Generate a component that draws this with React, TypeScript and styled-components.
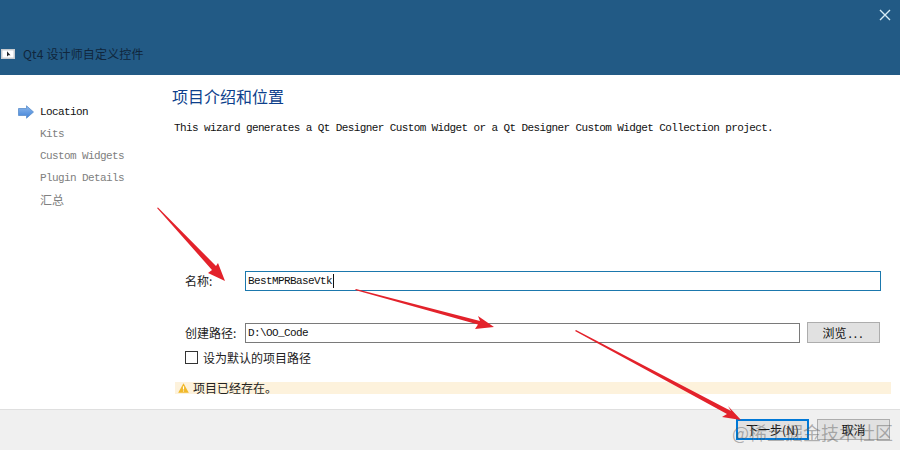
import React from "react";
import styled, { createGlobalStyle } from "styled-components";

const cjk = `"Noto Sans CJK SC", "Liberation Sans", sans-serif`;
const mono = `"Liberation Mono", "Noto Sans CJK SC", monospace`;

const Global = createGlobalStyle`
  html, body { margin: 0; padding: 0; background: #fff; }
`;

const Page = styled.div`
  position: relative;
  width: 900px;
  height: 450px;
  overflow: hidden;
  display: flex;
  flex-direction: column;
  background: #fff;
  font-family: ${cjk};
`;

const TitleBar = styled.header`
  height: 75px;
  flex: none;
  box-sizing: border-box;
  background: #225a85;
  display: flex;
  flex-direction: column;
  padding: 9px 9px 0 1px;
`;

const CloseRow = styled.div`
  display: flex;
  justify-content: flex-end;
  height: 12px;
`;

const TitleRow = styled.div`
  display: flex;
  align-items: center;
  gap: 8px;
  margin-top: 24px;
  height: 18px;
`;

const TitleText = styled.span`
  font-size: 12px;
  line-height: 18px;
  letter-spacing: 0.15px;
  color: #10263c;
`;

const Body = styled.div`
  flex: 1;
  min-height: 0;
  display: flex;
`;

const Sidebar = styled.nav`
  width: 173px;
  flex: none;
  box-sizing: border-box;
  padding: 26px 0 0 18px;
  display: flex;
  flex-direction: column;
`;

const NavItem = styled.div<{ $active?: boolean }>`
  height: 22px;
  display: flex;
  align-items: center;
  gap: 6px;
  padding-left: ${(p) => (p.$active ? 0 : 22)}px;
  font-family: ${mono};
  font-size: 11px;
  letter-spacing: -0.6px;
  color: ${(p) => (p.$active ? "#111" : "#808080")};
`;

const NavCjk = styled.span`
  font-family: ${cjk};
  font-size: 12px;
  line-height: 20px;
  letter-spacing: 0;
`;

const Main = styled.main`
  flex: 1;
  min-width: 0;
  box-sizing: border-box;
  padding: 9px 9px 15px 0;
  display: flex;
  flex-direction: column;
`;

const Heading = styled.h1`
  margin: 0 0 0 -1px;
  font-size: 16px;
  line-height: 24px;
  font-weight: 400;
  color: #0d3f8c;
`;

const Description = styled.p`
  margin: 12px 0 0 1px;
  font-family: ${mono};
  font-size: 11px;
  line-height: 16px;
  letter-spacing: -0.61px;
  color: #111;
`;

const Form = styled.div`
  margin-top: auto;
  display: flex;
  flex-direction: column;
`;

const FieldRow = styled.div<{ $top?: number }>`
  display: flex;
  align-items: center;
  gap: 7px;
  padding: 0 10px 0 12px;
  margin-top: ${(p) => p.$top ?? 0}px;
`;

const FieldLabel = styled.label`
  width: 60px;
  margin-right: -7px;
  flex: none;
  font-size: 12px;
  line-height: 20px;
  color: #222;
`;

const Field = styled.div<{ $focus?: boolean }>`
  flex: 1;
  min-width: 0;
  height: 20px;
  box-sizing: border-box;
  border: 1px solid ${(p) => (p.$focus ? "#1b78ad" : "#7a7a7a")};
  background: #fff;
  padding-left: 2px;
  display: flex;
  align-items: center;
  font-family: ${mono};
  font-size: 11px;
  letter-spacing: -0.6px;
  color: #111;
`;

const Caret = styled.span`
  width: 1px;
  height: 14px;
  background: #111;
  margin-left: 1px;
`;

const Button = styled.button<{ $primary?: boolean; $inset?: boolean }>`
  width: 73px;
  height: 21px;
  box-sizing: border-box;
  padding: 0;
  flex: none;
  margin-right: ${(p) => (p.$inset ? 1 : 0)}px;
  background: #e1e1e1;
  border: ${(p) => (p.$primary ? "2px solid #0078d7" : "1px solid #adadad")};
  font-family: ${cjk};
  font-size: 12px;
  line-height: 1;
  color: #111;
`;

const Dots = styled.span`
  letter-spacing: 2px;
  margin-left: 2px;
`;

const CheckRow = styled.div`
  display: flex;
  align-items: center;
  gap: 5px;
  margin: 8px 0 0 12px;
  height: 13px;
  font-size: 12px;
  color: #222;
`;

const CheckBox = styled.span`
  width: 13px;
  height: 13px;
  box-sizing: border-box;
  border: 1px solid #333;
  background: #fff;
`;

const Warning = styled.div`
  margin: 18px 0 0 2px;
  height: 12px;
  background: #fdf2dc;
  display: flex;
  align-items: center;
  gap: 4px;
  padding-left: 3px;
  font-size: 12px;
  line-height: 10px;
  color: #222;
`;

const Footer = styled.footer`
  height: 41px;
  flex: none;
  box-sizing: border-box;
  background: #f0f0f0;
  border-top: 1px solid #dfdfdf;
  padding: 9px 10px 0 0;
  display: flex;
  justify-content: flex-end;
  gap: 8px;
`;

const ArrowLayer = styled.svg`
  position: absolute;
  inset: 0;
  pointer-events: none;
`;

const Watermark = styled.div`
  position: absolute;
  right: 7px;
  bottom: 6px;
  font-size: 18px;
  line-height: 24px;
  color: rgba(90, 90, 90, 0.45);
  white-space: nowrap;
`;

const App: React.FC = () => (
  <Page>
    <Global />
    <TitleBar>
      <CloseRow>
        <svg width="12" height="12" viewBox="0 0 12 12">
          <path d="M1 1L11 11M11 1L1 11" stroke="#d6ecf7" strokeWidth="1.4" fill="none" />
        </svg>
      </CloseRow>
      <TitleRow>
        <svg width="14" height="10" viewBox="0 0 14 10">
          <rect x="0" y="0" width="14" height="10" fill="#c9ccd0" />
          <rect x="1.5" y="1.5" width="11" height="7" fill="#fff" />
          <path d="M6 2.2L6 7.5L7.4 6.3L9.5 6.3Z" fill="#20242a" />
        </svg>
        <TitleText>Qt4 设计师自定义控件</TitleText>
      </TitleRow>
    </TitleBar>
    <Body>
      <Sidebar>
        <NavItem $active>
          <svg width="16" height="14" viewBox="0 0 16 14">
            <defs>
              <linearGradient id="navArrow" x1="0" y1="0" x2="0" y2="1">
                <stop offset="0" stopColor="#8db8ec" />
                <stop offset="1" stopColor="#3f82d8" />
              </linearGradient>
            </defs>
            <path d="M0.5 3.5H8.5V0.8L15.5 7L8.5 13.2V10.5H0.5Z" fill="url(#navArrow)" stroke="#5b8ecb" strokeWidth="0.8" />
          </svg>
          Location
        </NavItem>
        <NavItem>Kits</NavItem>
        <NavItem>Custom Widgets</NavItem>
        <NavItem>Plugin Details</NavItem>
        <NavItem><NavCjk>汇总</NavCjk></NavItem>
      </Sidebar>
      <Main>
        <Heading>项目介绍和位置</Heading>
        <Description>
          This wizard generates a Qt Designer Custom Widget or a Qt Designer Custom Widget Collection project.
        </Description>
        <Form>
          <FieldRow>
            <FieldLabel>名称:</FieldLabel>
            <Field $focus>BestMPRBaseVtk<Caret /></Field>
          </FieldRow>
          <FieldRow $top={31}>
            <FieldLabel>创建路径:</FieldLabel>
            <Field>D:\OO_Code</Field>
            <Button $inset>浏览<Dots>...</Dots></Button>
          </FieldRow>
          <CheckRow>
            <CheckBox />
            设为默认的项目路径
          </CheckRow>
          <Warning>
            <svg width="11" height="10" viewBox="0 0 11 10">
              <path d="M5.5 0.3L10.8 9.7H0.2Z" fill="#f1b92a" />
              <path d="M5.5 3.2V6.6M5.5 7.4V8.6" stroke="#fff" strokeWidth="1.1" />
            </svg>
            项目已经存在。
          </Warning>
        </Form>
      </Main>
    </Body>
    <Footer>
      <Button $primary>下一步(N)</Button>
      <Button>取消</Button>
    </Footer>
    <Watermark>@稀土掘金技术社区</Watermark>
    <ArrowLayer width="900" height="450" viewBox="0 0 900 450">
      <g fill="#e3222b">
        <polygon points="157,208 158,207.5 216,266 218,263 225,281 208,273 212,270" />
        <polygon points="355,290 356,289 480,321 478,316 494,327 475,329 478,324.5" />
        <polygon points="575,331 576,330 731,411 728,406 741,420 722,417 727,414" />
      </g>
    </ArrowLayer>
  </Page>
);

export default App;
